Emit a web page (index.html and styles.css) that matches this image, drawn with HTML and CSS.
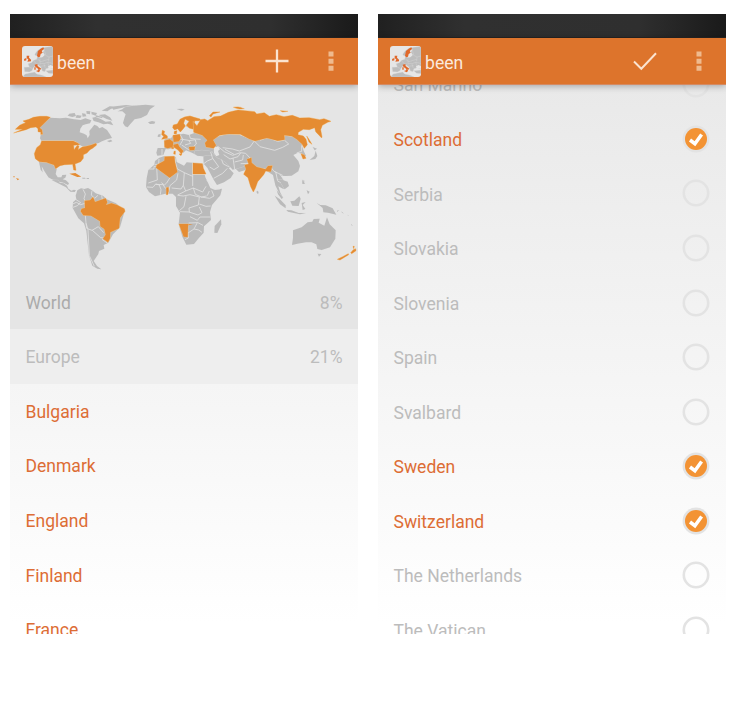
FILE: index.html
```html
<!DOCTYPE html>
<html lang="en">
<head>
<meta charset="utf-8">
<title>been</title>
<link rel="stylesheet" href="styles.css">
</head>
<body>
<svg class="defs" width="0" height="0" aria-hidden="true">
  <symbol id="app" viewBox="66 138 93 93">
    <rect x="66" y="138" width="93" height="93" fill="#e6e6e6"/>
    <g fill="#bdbdbd" stroke="#dedede" stroke-width="1">
      <path d="M104 163 112 152 124 144 137 142 159 139V208L148 203 138 206 135 215 127 213 123 202 115 195 108 196 100 203 96 212 88 216 74 215 72 202 88 201 84 191 94 188 101 181 110 178 112 170 119 172 126 172 133 166 128 158 132 148 123 152 115 165 108 168Z"/>
      <path d="M68 231 75 222 104 216 110 222 127 226 139 231ZM137 212 159 210V221L146 220Z"/>
      <path fill="none" d="M133 148 137 166 147 171 159 168M120 176 120 190 132 191 143 187 158 190M101 183 110 192 122 192M112 177 122 185 146 178M132 192 136 205M88 202 97 205M143 187 148 203M147 171 146 184M120 199 137 197"/>
      <path fill="#e6e6e6" stroke="none" d="M129 149 133 148 129 157 134 164 128 170 121 172 123 164 128 159 126 154ZM144 199 152 195 159 199V206L146 205Z"/>
    </g>
    <g fill="#e0682a">
      <path d="M111 167 114 153 122 146 130 142 132 147 125 153 128 158 122 162 120 170 114 172Z"/>
      <path d="M80 167 88 167 87 173 93 179 93 184 82 185 85 178 80 175ZM72 177 79 174 79 181 73 183ZM104 194 112 192 113 198 124 206 122 209 119 207 120 213 116 217 108 213 114 211 115 207 106 200ZM103 202 107 202 107 209 103 209Z"/>
    </g>
  </symbol>
  <symbol id="more" viewBox="0 0 6 20">
    <path fill="#efba8e" d="M.5.5h5v5h-5zM.5 7.7h5v5h-5zM.5 14.8h5v5h-5z"/>
  </symbol>
  <symbol id="on" viewBox="0 0 28 28">
    <circle cx="14" cy="14" r="13.4" fill="#e3e3e3"/>
    <circle cx="14" cy="14" r="11" fill="#f39334"/>
    <path d="M8 15 12.9 18.7 19.6 9.5" fill="none" stroke="#fff" stroke-width="3.5"/>
  </symbol>
  <symbol id="off" viewBox="0 0 28 28">
    <circle cx="14" cy="14" r="12.2" fill="none" stroke="#e3e3e3" stroke-width="2.6"/>
  </symbol>
</svg>
<main class="screens">
  <section class="phone">
    <div class="status"></div>
    <header class="bar">
      <svg class="logo"><use href="#app"/></svg>
      <h1 class="title">been</h1>
      <svg class="action" viewBox="0 0 24 24"><path d="M12 .5v23M.5 12h23" fill="none" stroke="#fbe3d0" stroke-width="2.3"/></svg>
      <svg class="more"><use href="#more"/></svg>
    </header>
    <div class="content">
      <svg class="map" viewBox="10 85 348 190">
        <!-- North America -->
        <g class="land" transform="translate(10 95) scale(.33333)">
          <path d="M120 68 150 70 168 68 192 73 212 75 226 70 244 76 240 85 227 88 218 91 211 101 209 112 222 116 230 121 233 130 239 120 238 108 246 98 253 89 262 93 268 100 277 96 291 105 301 120 306 129 291 133 276 139 266 144 259 146 250 151 236 155 222 157 211 151 200 142 190 137 94 137 90 130 93 116 88 97Z"/>
          <path d="M87 201 112 202 123 207 134 212 140 223 137 237 143 247 154 247 157 240 169 239 166 248 158 253 168 256 177 265 174 270 160 263 145 260 128 254 115 247 103 228 95 214 98 232 92 224Z"/>
          <path d="M178 56 194 54 198 63 187 66 173 62ZM200 60 215 62 211 69 197 68ZM216 55 226 56 229 64 218 65ZM229 48 241 49 240 58 230 56ZM244 50 261 54 257 62 245 58ZM247 68 257 66 272 72 287 80 302 79 310 91 293 86 280 88 265 82 251 78ZM266 60 285 58 300 67 307 77 290 72ZM275 47 299 34 322 35 302 42 292 49ZM304 35 348 30 385 34 347 36 310 44ZM258 61 278 66 276 69 257 65ZM291 138 303 134 307 139 298 142Z"/>
          <path d="M337 43 344 37 370 32 407 29 435 32 420 43 411 60 393 69 374 73 361 87 353 97 345 94 339 84 343 70 347 58 337 49 323 49Z"/>
          <path d="M414 82 426 78 436 80 433 86 420 87ZM500 42 516 41 524 44 514 47Z"/>
          <path class="thin" d="M216 248h9l2 3h-9zM230 249h7v3h-7z"/>
          <g class="been">
            <path d="M121 67 110 64 90 64 70 67 57 73 39 78 47 83 39 86 29 91 16 103 38 103 11 114 48 104 62 98 78 96 84 101 84 110 93 112 92 118 98 118 96 104 89 98Z"/>
            <path d="M95 138 190 138 203 144 210 149 191 151 192 164 202 151 207 153 204 164 217 156 229 154 244 150 258 145 260 150 248 160 240 164 231 174 220 179 220 190 212 200 195 207 198 226 191 225 188 208 164 209 150 212 137 221 132 210 121 206 109 202 88 200 76 191 73 176 80 158 91 149Z"/>
            <path class="thin" d="M178 236 196 234 214 245 202 246ZM18 249 28 252 23 256ZM10 244h4v3h-4z"/>
          </g>
        </g>
        <!-- South America -->
        <g class="land" transform="translate(10 180) scale(.33333)">
          <path d="M202 31 213 25 223 27 234 24 246 31 257 40 279 47 290 58 318 70 344 93 330 142 309 163 295 188 281 195 283 206 267 213 265 222 251 243 261 258 274 268 262 266 247 257 237 226 229 152 222 130 205 115 188 84 189 67 199 58 197 47Z"/>
          <path d="M125 0 145 1 149 8 161 10 171 17 175 26 184 32 192 29 198 31 194 36 181 35 168 22 153 14Z"/>
          <path class="border" d="M219 28 226 42 222 56 229 69 212 74 199 67 188 72M197 58 212 68 202 77 189 82M246 32 244 45 254 55 264 46M275 46 278 65M216 94 226 106 228 129 234 149 238 227 253 259M228 130 230 145 246 151 265 140 281 158M247 151 272 173 281 174M276 178 293 190"/>
          <path class="been" d="M212 94 215 86 225 84 224 62 240 61 249 51 255 66 287 55 292 67 288 75 304 70 321 75 343 86 345 94 330 114 327 145 301 157 300 175 294 187 279 176 287 164 283 147 271 139 270 124 243 107 220 106Z"/>
        </g>
        <!-- Europe, the Middle East and Africa -->
        <g class="land" transform="translate(120 95) scale(.33333)">
          <path d="M133 134 143 130 153 130 160 120 176 119 190 116 207 120 223 114 222 101 208 100 198 94 208 73 222 78 222 91 231 113 260 127 289 145 281 160 284 175 269 184 232 182 219 175 198 166 189 174 179 161 165 157 145 163 137 162 130 180 112 182 109 173 113 159 134 159Z"/>
          <path d="M114 119 122 116 121 125 113 126ZM225 168 246 166 271 169 284 174 291 181 259 185 233 182 225 177Z"/>
          <path d="M250 184 286 180 298 171 307 188 329 198 353 190 379 204 389 221 357 231 339 214 326 219 341 235 332 249 312 262 291 270 281 254 262 218 251 206Z"/>
          <path d="M118 188 131 184 150 183 168 186 170 201 192 212 200 202 250 206 249 220 256 247 264 263 271 279 283 284 306 281 301 301 276 330 270 351 273 375 252 394 251 413 236 430 222 447 199 449 187 425 176 387 180 353 168 333 168 306 158 296 136 296 105 304 87 291 78 276 80 250 85 225 103 209 105 198Z"/>
          <path d="M303 373 304 388 292 414 283 413 284 393Z"/>
          <path class="border" d="M104 208 116 208 117 192M86 222H102V214H110M110 214 112 255 85 264M169 185 166 201 172 222 193 233 218 244M150 248 140 264 133 270 124 263M174 235 170 255 150 272M218 203V273M218 238H257M193 233 190 271 183 282 155 279M150 272 145 295M80 276 99 277 107 267 118 270 123 284 121 299M107 268 129 269 137 281M190 271 197 288 173 300M197 288 220 279 248 291 258 274M220 279 226 298 244 306 260 303M198 304 192 335 178 347M173 301 190 303 210 299 238 306 235 330 207 339 208 351 180 350M242 306 269 310 282 303 275 286M238 327 258 334 272 333M207 351 234 360 246 353 238 336M210 365 232 376 240 366 271 366M206 384 232 383 222 402 204 414M232 382 249 391M222 402 236 405 246 412M204 414 205 429 195 434M260 255 285 283 300 282M262 302 268 288"/>
          <path class="border" d="M207 116 211 130 226 132 242 133M180 132 206 136 212 145 195 150M185 150 206 164 226 159M181 120 189 134 180 150M206 137 226 134 229 147 221 154M272 171 278 191 262 198 250 207M278 190 296 215 282 224 269 216M298 178 310 207 328 216M322 220 308 235 281 250M313 189 336 196 334 220M333 187 356 174 382 189M211 100 226 103M208 107 223 109M126 162V180"/>
          <g class="been">
            <path class="nordic" d="M158 98 160 90 172 87 180 73 194 66 210 63 222 67 240 72 244 77 224 77 223 90 233 99 218 102 208 99 199 91 208 79 195 72 191 85 196 93 189 102 181 111 173 101 164 105Z"/>
            <path d="M163 109 171 107 169 117 162 116ZM159 121 179 118 182 130 177 139 161 141ZM133 137 149 133 160 141 158 156 143 160 134 157ZM127 106 134 109 132 116 142 123 142 130 125 133 131 124 125 119ZM160 149 174 146 177 154 190 168 184 177 174 165 161 156ZM177 177 186 176 183 182ZM162 169 166 168 166 178 161 177ZM155 157h6v4h-6zM207 156 225 155 223 165 209 166Z"/>
            <path d="M110 210 133 197 134 185 163 184 165 202 172 231 149 248 108 218ZM219 204 247 206 250 220 258 237H219ZM139 278 145 277 146 287 143 299H139Z"/>
            <path d="M177 387H206L204 394 203 426 191 425Z"/><path class="thin" d="M207 387 219 388 208 390Z"/>
            <path d="M268 62 279 51 300 51 279 57 273 66ZM343 37 363 37 365 40 350 40Z"/>
          </g>
        </g>
        <!-- Asia -->
        <g class="land" transform="translate(230 95) scale(.33333)">
          <path d="M-50 132-31 123-5 117 29 120 72 137 107 128 164 136 165 122 191 125 215 143 217 155 221 168 228 182 221 187 216 176 204 173 190 180 205 198 210 213 205 229 185 242 166 243 154 242 162 259 172 275 160 282 145 274 151 293 160 309 150 301 136 271 129 240 104 224 80 220 54 203 38 215 8 224-10 204-24 194-40 187-52 171-38 158-58 150Z"/>
          <path class="border" d="M72 137 90 155 134 166 158 157 176 147 164 136M90 136 112 127 143 139 163 135M-22 158 7 162 28 168 60 156 73 138M-35 155-17 170 8 181 31 173 47 175 60 189 57 205 32 206M-19 179 0 192 24 185 32 174M-15 163 12 178M9 189 14 222M14 201 38 195 40 180M120 213 132 229 145 235 158 241M137 230 143 258 153 263M150 238 160 252M200 174 215 169 215 151M57 210 79 222 105 222"/>
          <path d="M248 156 261 161 254 166ZM257 167 262 183 256 192 239 195 253 183ZM216 254 223 257 222 267 217 266ZM79 290 84 287 86 295 82 296Z"/>
          <path class="water" d="M-48 160-36 154-30 163-36 168-32 180-41 184-48 174Z"/>
          <g class="been">
            <path d="M-110 80-99 92-88 74-76 72-67 77-48 65-28 63-5 52 24 45 74 50 80 57 103 53 118 64 139 59 162 65 187 61 209 69 238 68 269 74 282 71 303 79 293 82 277 91 272 104 276 125 275 129 257 110 254 98 238 104 220 103 205 112 204 119 220 123 228 133 232 149 223 160 216 147 200 133 186 124 163 121 164 134 143 137 111 129 75 138 58 132 31 118-5 117-31 121-51 135-42 151-49 160-72 156-75 144-68 136-83 121-109 112Z"/>
            <path d="M10 37 24 36 43 41 29 42ZM151 47 174 49 158 51ZM230 123 235 130 246 148 237 141ZM213 176 223 180 228 190 219 192Z"/>
            <path d="M51 193 64 188 65 203 80 216 107 223 114 213 127 212 122 230 107 228 101 239 83 260 76 280 70 291 62 275 54 248 41 238 48 223 44 210 56 207Z"/>
          </g>
        </g>
        <!-- Oceania -->
        <g class="land" transform="translate(240 180) scale(.33333)">
          <path d="M159 151 185 142 203 127 217 125 221 117 239 116 236 128 253 137 261 112 269 133 287 151 286 176 270 202 245 210 232 207 229 193 215 187 198 187 172 191 156 195 159 174Z"/>
          <path d="M104 47 119 57 137 76 137 85 120 73ZM110 31 119 41 129 53 125 57 114 43ZM151 64 163 62 178 49 182 56 176 78 157 77ZM185 69 197 66 188 75 196 87 188 90ZM139 90 154 91 176 99 198 99 180 103 144 95ZM230 69 241 75 257 76 278 85 289 104 264 98 250 97 248 84ZM233 221 244 222 237 230ZM188 0 195 12 187 11ZM200 31 209 35 204 43ZM111 0 128 0 143 5 147 18 134 28 121 6Z"/>
          <path class="thin" d="M291 92 298 90 291 96ZM304 94 312 101 306 98ZM323 104 328 108 323 106ZM333 132 339 137 334 136Z"/>
          <g class="been"><path d="M292 238 308 230 325 221 326 224 300 240ZM332 218 340 209 347 206 348 212 335 221ZM339 199 343 199 341 206Z"/></g>
        </g>
      </svg>
      <div class="row world"><span>World</span><span>8%</span></div>
      <div class="row region"><span>Europe</span><span>21%</span></div>
      <div class="countries">
        <div class="row visited"><span>Bulgaria</span></div>
        <div class="row visited"><span>Denmark</span></div>
        <div class="row visited"><span>England</span></div>
        <div class="row visited"><span>Finland</span></div>
        <div class="row visited"><span>France</span></div>
      </div>
    </div>
  </section>
  <section class="phone">
    <div class="status"></div>
    <header class="bar">
      <svg class="logo"><use href="#app"/></svg>
      <h1 class="title">been</h1>
      <svg class="action" viewBox="0 0 24 24"><path d="M1 12.5 8.3 19.8 23 4.3" fill="none" stroke="#fbe3d0" stroke-width="2"/></svg>
      <svg class="more"><use href="#more"/></svg>
    </header>
    <div class="content picker">
      <div class="row"><span>San Marino</span><svg class="check"><use href="#off"/></svg></div>
      <div class="row visited"><span>Scotland</span><svg class="check"><use href="#on"/></svg></div>
      <div class="row"><span>Serbia</span><svg class="check"><use href="#off"/></svg></div>
      <div class="row"><span>Slovakia</span><svg class="check"><use href="#off"/></svg></div>
      <div class="row"><span>Slovenia</span><svg class="check"><use href="#off"/></svg></div>
      <div class="row"><span>Spain</span><svg class="check"><use href="#off"/></svg></div>
      <div class="row"><span>Svalbard</span><svg class="check"><use href="#off"/></svg></div>
      <div class="row visited"><span>Sweden</span><svg class="check"><use href="#on"/></svg></div>
      <div class="row visited"><span>Switzerland</span><svg class="check"><use href="#on"/></svg></div>
      <div class="row"><span>The Netherlands</span><svg class="check"><use href="#off"/></svg></div>
      <div class="row"><span>The Vatican</span><svg class="check"><use href="#off"/></svg></div>
    </div>
  </section>
</main>
</body>
</html>
```
FILE: styles.css
```css
* { box-sizing: border-box; }
body { margin: 0; background: #fff; font-family: Roboto, sans-serif; }
.defs { display: block; }
.screens { display: flex; gap: 20px; padding: 14px 10px; }
.phone { width: 348px; height: 620px; overflow: hidden; display: flex; flex-direction: column; }
.status { flex: none; height: 24px; background: linear-gradient(90deg, #202020, #303030 25%, #2f2f2f 75%, #1a1a1a); border-bottom: 1px solid #292522; }
.bar { position: relative; z-index: 1; flex: none; height: 47px; display: flex; align-items: center; padding: 0 24px 0 12px; background: #dd742c; border-bottom: 1px solid #d58a62; box-shadow: 0 1px 7px rgba(0, 0, 0, .32); }
.logo { width: 31px; height: 31px; border-radius: 3px; }
.title { margin: 0 auto 0 4px; padding-top: 3px; color: #fbe9dd; font-size: 17.6px; font-weight: 400; line-height: 24px; }
.action { width: 24px; height: 24px; margin-right: 39px; }
.more { width: 6px; height: 20px; }
.content { flex: 1; min-height: 0; overflow: hidden; background: #e5e5e5; }
.map { display: block; width: 348px; height: 190px; margin-bottom: -.6px; }
.land { fill: #bababa; stroke: #e2e2e2; stroke-width: 1.5; stroke-linejoin: round; paint-order: stroke; }
.land .thin { stroke: none; }
.land .water { fill: #e5e5e5; stroke: none; }
.land .border { fill: none; stroke-width: 2.5; }
.been { fill: #e58c32; stroke: #f0c284; stroke-width: 2.4; }
.been .nordic { stroke-width: 3; }
.row { height: 54.55px; display: flex; align-items: center; justify-content: space-between; padding: 2.2px 15.5px 0; color: #bcbcbc; font-size: 17.55px; line-height: 24px; }
.world { color: #ababab; }
.world span + span { color: #bcbcbc; }
.region { background: #eee; }
.countries { height: 252px; background: linear-gradient(#f5f5f5, #fff 95%); }
.row.visited { color: #dd6d35; }
.picker { background: linear-gradient(#e9e9e9, #fff 98%); }
.picker .row:first-child { margin-top: -27.9px; }
.picker .row { padding-right: 16px; }
.check { width: 28px; height: 28px; margin-top: -2.2px; }
```
